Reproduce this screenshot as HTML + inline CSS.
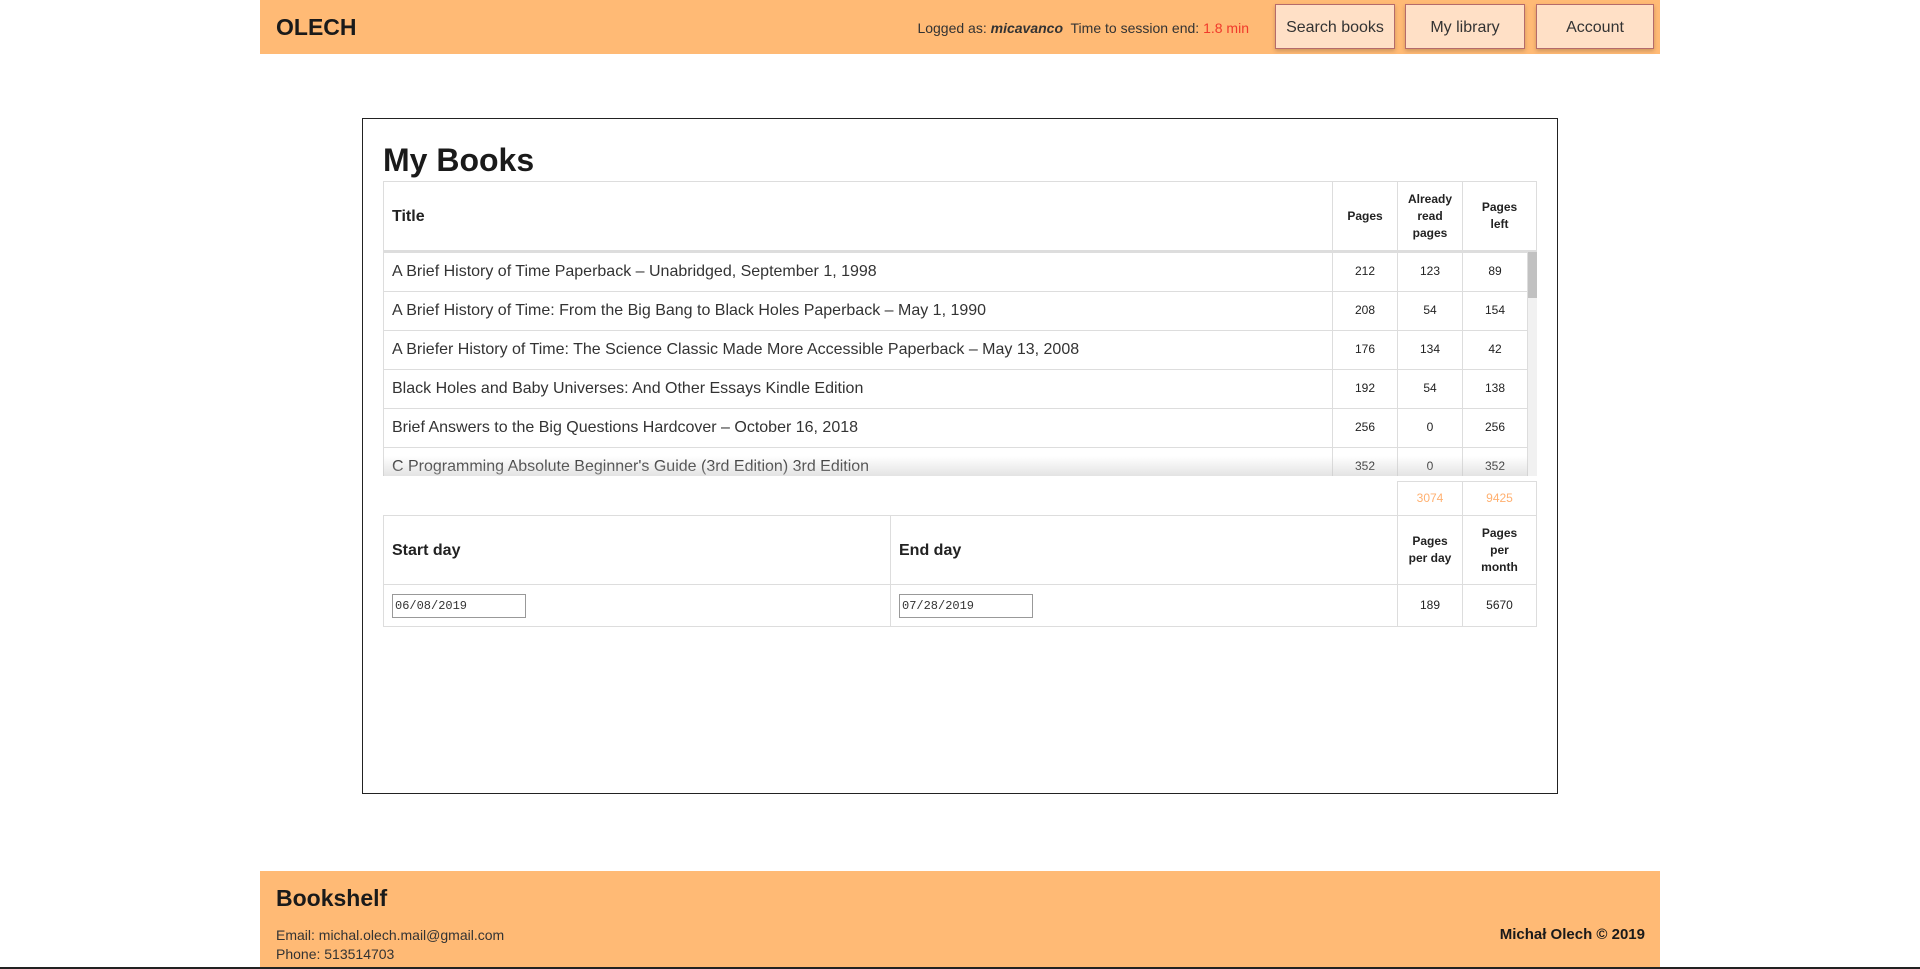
<!DOCTYPE html>
<html><head><meta charset="utf-8"><style>
*{box-sizing:border-box;margin:0;padding:0}
body{width:1920px;height:969px;background:#fff;font-family:"Liberation Sans",sans-serif;color:#222;position:relative;overflow:hidden}
.hdr{position:absolute;left:260px;top:0;width:1400px;height:54px;background:#FFBA75}
.logo{position:absolute;left:16px;top:14px;font-size:23px;font-weight:bold;color:#1a1a1a}
.info{position:absolute;right:411px;top:20px;font-size:14px;color:#333}
.info b{font-style:italic}
.info .r{color:#f0392b}
.btn{position:absolute;top:4px;height:45px;background:#FFE0C6;border:1px solid #b56b6b;box-shadow:0 2px 4px rgba(0,0,0,.2);font-size:16px;color:#333;text-align:center;line-height:45px}
.box{position:absolute;left:362px;top:118px;width:1196px;height:676px;border:1px solid #222}
h1{position:absolute;left:383px;top:142px;font-size:32px;font-weight:bold;color:#1a1a1a}
table{border-collapse:collapse;position:absolute}
td,th{border:1px solid #ddd}
th{font-size:12px;font-weight:bold;text-align:center;line-height:17px}
th.l{text-align:left;font-size:16px;padding-left:8px}
td{font-size:12px;text-align:center;height:39px;padding-bottom:2px}
td.t{text-align:left;font-size:16px;padding-left:8px;color:#333;padding-bottom:0}
.scroll{position:absolute;left:383px;top:250px;width:1154px;height:226px;overflow:hidden;border-top:2px solid #ddd}
.sb{position:absolute;left:1528px;top:252px;width:9px;height:224px;background:#f1f1f1}
.sb div{width:9px;height:46px;background:#c1c1c1}
.shade{position:absolute;left:383px;top:456px;width:1145px;height:20px;background:linear-gradient(rgba(255,255,255,0),rgba(200,200,200,.5))}
.in{display:inline-block;border:1px solid #999;width:134px;height:24px;font-family:"Liberation Mono",monospace;font-size:12px;line-height:22px;padding-left:2px;text-align:left}
.ftr{position:absolute;left:260px;top:871px;width:1400px;height:98px;background:#FFBA75}
.ftr .b{position:absolute;left:16px;top:14px;font-size:23px;font-weight:bold;color:#1a1a1a}
.ftr .e{position:absolute;left:16px;top:55px;font-size:14px;line-height:19px;color:#333}
.ftr .c{position:absolute;right:15px;top:55px;font-size:15px;font-weight:bold;color:#1a1a1a}
.line{position:absolute;left:0;top:967px;width:1920px;height:2px;background:#222}
</style></head><body>
<div class="hdr">
<div class="logo">OLECH</div>
<div class="info">Logged as: <b>micavanco</b>&nbsp; Time to session end: <span class="r">1.8 min</span></div>
</div>
<div class="btn" style="left:1275px;width:120px">Search books</div>
<div class="btn" style="left:1405px;width:120px">My library</div>
<div class="btn" style="left:1536px;width:118px">Account</div>
<div class="box"></div>
<h1>My Books</h1>
<table style="left:383px;top:181px;width:1154px">
<tr style="height:69px"><th class="l" style="width:949px">Title</th><th style="width:65px">Pages</th><th style="width:65px">Already<br>read<br>pages</th><th>Pages<br>left</th></tr>
</table>
<div class="scroll"><table style="left:0;top:0;width:1145px">
<tr><td class="t" style="width:949px">A Brief History of Time Paperback – Unabridged, September 1, 1998</td><td style="width:65px">212</td><td style="width:65px">123</td><td>89</td></tr>
<tr><td class="t">A Brief History of Time: From the Big Bang to Black Holes Paperback – May 1, 1990</td><td>208</td><td>54</td><td>154</td></tr>
<tr><td class="t">A Briefer History of Time: The Science Classic Made More Accessible Paperback – May 13, 2008</td><td>176</td><td>134</td><td>42</td></tr>
<tr><td class="t">Black Holes and Baby Universes: And Other Essays Kindle Edition</td><td>192</td><td>54</td><td>138</td></tr>
<tr><td class="t">Brief Answers to the Big Questions Hardcover – October 16, 2018</td><td>256</td><td>0</td><td>256</td></tr>
<tr><td class="t">C Programming Absolute Beginner's Guide (3rd Edition) 3rd Edition</td><td>352</td><td>0</td><td>352</td></tr>
</table></div>
<div class="shade"></div>
<div class="sb"><div></div></div>
<table style="left:1397px;top:481px;width:140px">
<tr><td style="width:65px;height:34px;color:#FFB070">3074</td><td style="height:34px;color:#FFB070">9425</td></tr>
</table>
<table style="left:383px;top:515px;width:1154px">
<tr style="height:69px"><th class="l" style="width:507px">Start day</th><th class="l" style="width:507px">End day</th><th style="width:65px">Pages<br>per day</th><th>Pages<br>per<br>month</th></tr>
<tr><td class="t" style="height:42px"><span class="in">06/08/2019</span></td><td class="t"><span class="in">07/28/2019</span></td><td>189</td><td>5670</td></tr>
</table>
<div class="ftr">
<div class="b">Bookshelf</div>
<div class="e">Email: michal.olech.mail@gmail.com<br>Phone: 513514703</div>
<div class="c">Michał Olech © 2019</div>
</div>
<div class="line"></div>
</body></html>
